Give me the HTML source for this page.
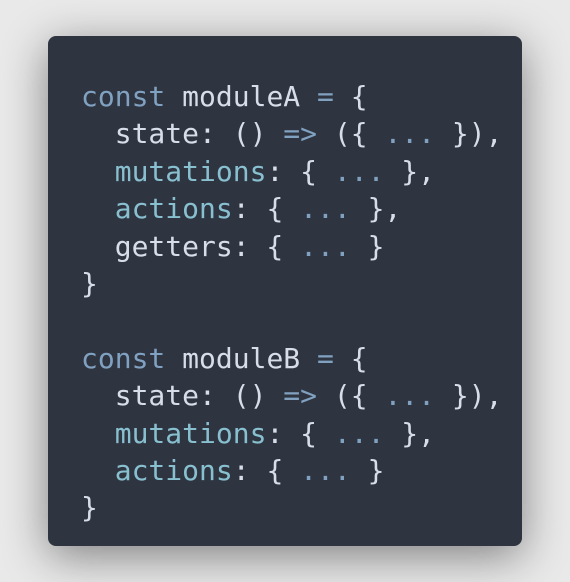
<!DOCTYPE html>
<html><head><style>
html,body{margin:0;padding:0;}
body{width:570px;height:582px;background:#e9e9e9;position:relative;overflow:hidden;}
.card{position:absolute;left:48px;top:36px;width:474px;height:510px;background:#2e3440;border-radius:8px;box-shadow:0 10px 45px rgba(0,0,0,.45);}
pre{margin:0;position:absolute;left:33px;top:42px;font-family:"DejaVu Sans Mono","Liberation Mono",monospace;font-size:28px;line-height:37.4px;color:#d8dee9;}
.k{color:#81a1c1}.f{color:#88c0d0}
</style></head><body>
<div class="card"><pre><span class="k">const</span> moduleA <span class="k">=</span> {
  state: () <span class="k">=&gt;</span> ({ <span class="k">...</span> }),
  <span class="f">mutations</span>: { <span class="k">...</span> },
  <span class="f">actions</span>: { <span class="k">...</span> },
  getters: { <span class="k">...</span> }
}

<span class="k">const</span> moduleB <span class="k">=</span> {
  state: () <span class="k">=&gt;</span> ({ <span class="k">...</span> }),
  <span class="f">mutations</span>: { <span class="k">...</span> },
  <span class="f">actions</span>: { <span class="k">...</span> }
}</pre></div>
</body></html>
